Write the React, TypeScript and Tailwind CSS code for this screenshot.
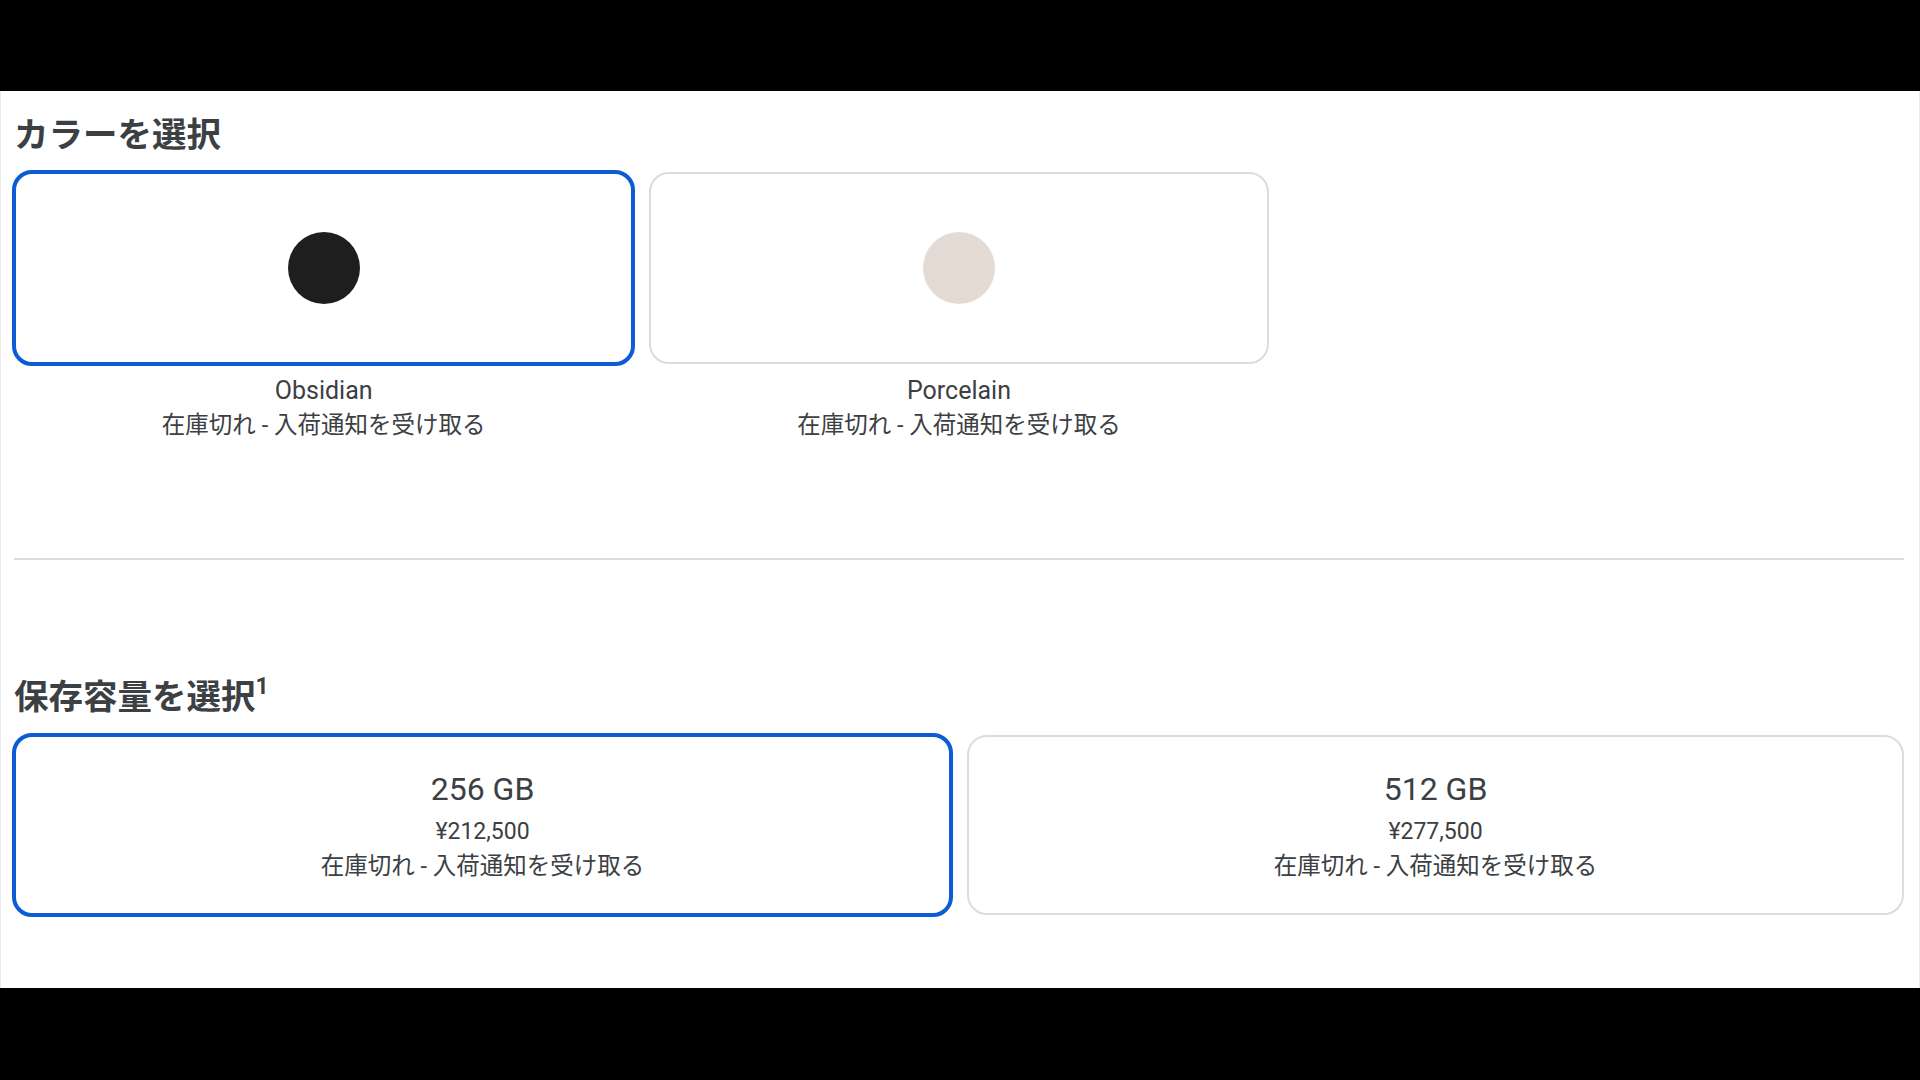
const font = { fontFamily: 'Roboto, "Noto Sans CJK JP", sans-serif' };

const colors = [
  { name: "Obsidian", swatch: "bg-[#1e1e1e]", selected: true },
  { name: "Porcelain", swatch: "bg-[#e3dbd3]", selected: false },
];

const storage = [
  { size: "256 GB", price: "¥212,500", selected: true },
  { size: "512 GB", price: "¥277,500", selected: false },
];

const stock = "在庫切れ - 入荷通知を受け取る";

export default function App() {
  return (
    <div className="w-full h-[1080px] bg-black flex flex-col" style={font}>
      <div className="h-[91px] shrink-0" />
      <main className="h-[897px] bg-white border-x border-[#e8eaed] pl-[13px] pr-[15px] pt-[24px] text-[#3c4043]">
        {/* Color */}
        <h2 className="text-[34.5px] leading-[40px] font-bold mb-[17px]">カラーを選択</h2>
        <div className="grid grid-cols-3 gap-4">
          {colors.map((c) => (
            <div key={c.name} className="flex flex-col items-center">
              <div
                className={
                  c.selected
                    ? "w-[calc(100%+4px)] h-[196px] -m-[2px] rounded-[20px] border-[4px] border-[#0b5cd5] flex items-center justify-center"
                    : "w-full h-[192px] rounded-[20px] border-2 border-[#dadce0] flex items-center justify-center"
                }
              >
                <div className={`w-[72px] h-[72px] rounded-full ${c.swatch}`} />
              </div>
              <div className="mt-[9px] text-[25px] leading-[35px]">{c.name}</div>
              <div className="text-[23.5px] leading-[35px]">{stock}</div>
            </div>
          ))}
        </div>

        <div className="mt-[115px] h-[2px] bg-[#dadce0]" />

        {/* Storage */}
        <h2 className="mt-[117px] text-[34.5px] leading-[40px] font-bold mb-[18px]">
          保存容量を選択<sup className="text-[23px] font-bold align-top relative top-[-2px] leading-none">1</sup>
        </h2>
        <div className="grid grid-cols-2 gap-4">
          {storage.map((s) => (
            <div
              key={s.size}
              className={
                s.selected
                  ? "h-[184px] -m-[2px] pt-[3px] rounded-[20px] border-[4px] border-[#0b5cd5] flex flex-col items-center justify-center"
                  : "h-[180px] pt-[3px] rounded-[20px] border-2 border-[#dadce0] flex flex-col items-center justify-center"
              }
            >
              <div className="text-[32px] leading-[40px]">{s.size}</div>
              <div className="mt-[7px] text-[23px] leading-[32px]">{s.price}</div>
              <div className="text-[23.5px] leading-[36px]">{stock}</div>
            </div>
          ))}
        </div>
      </main>
      <div className="flex-1" />
    </div>
  );
}
